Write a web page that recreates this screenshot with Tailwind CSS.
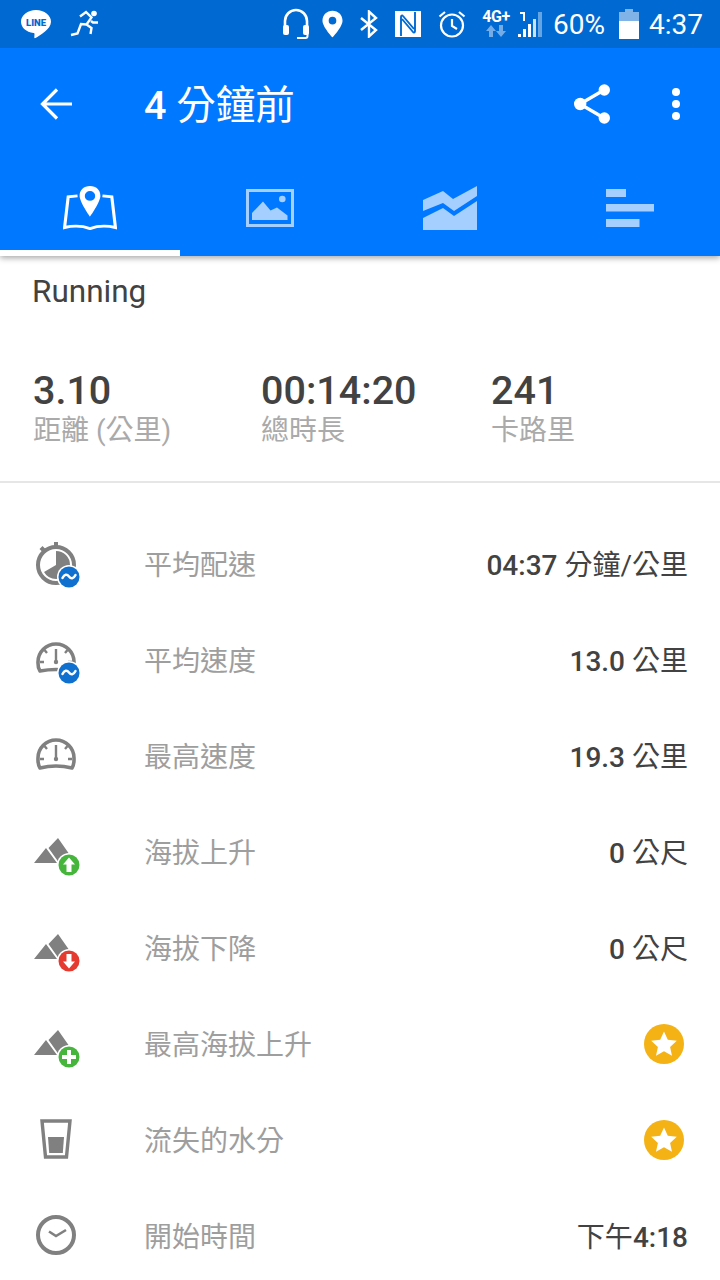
<!DOCTYPE html>
<html lang="en">
<head>
    <meta charset="UTF-8">
    <title>Activity</title>
    <script src="https://cdn.jsdelivr.net/npm/@tailwindcss/browser@4"></script>
</head>
<body class="bg-white w-[720px] h-[1280px] overflow-hidden font-['Roboto','Noto_Sans_CJK_TC',sans-serif]">
    <!-- Header -->
    <header class="relative z-10 bg-[#0078ff] shadow-[0_2px_6px_rgba(0,0,0,0.35)]">
        <!-- Status bar -->
        <div class="h-12 bg-[#0069d2] flex items-center text-white text-[28px]">
            <svg class="w-8 h-8 ml-5" viewBox="0 0 32 32"><path fill="#fff" d="M16 2C7.700 2 1 7.200 1 13.700c0 5.800 5.300 10.400 12.500 11.300.5.100 1 .4 1 1l-.2 3.500c0 .6.600 1 1.200.6 4-2.600 15.500-8.800 15.500-16.400C31 7.200 24.300 2 16 2z"/><text x="16" y="17.500" text-anchor="middle" font-size="9.500" font-weight="900" fill="#0069d2" font-family="Roboto">LINE</text></svg>
            <svg class="w-7 h-7 ml-[18px]" viewBox="0 0 28 28" fill="none" stroke="#fff" stroke-width="2.400"><circle cx="24" cy="3.500" r="2.800" fill="#fff" stroke="none"/><path d="M10 6.500L16 2l5.500 5.500-5 7 5 3.500-1 6M16.500 14.500L11 14l-3.500 9.500L1 25M21 11l2 1.500h5"/></svg>
            <svg class="w-[26px] h-8 ml-[185px]" viewBox="0 0 26 32" fill="none"><path stroke="#fff" stroke-width="2.600" d="M2 20v-7a11 11 0 0 1 22 0v7"/><rect x="0" y="17" width="6" height="10" rx="2" fill="#fff"/><rect x="20" y="17" width="6" height="10" rx="2" fill="#fff"/><path stroke="#fff" stroke-width="2" d="M24.500 25v3a2 2 0 0 1-2 2H14"/></svg>
            <svg class="w-[21px] h-7 ml-[13px]" viewBox="0 0 22 28"><path fill="#fff" fill-rule="evenodd" d="M11 0C5 0 .5 4.500.5 10.500.5 17 11 28 11 28s10.500-11 10.500-17.500C21.500 4.500 17 0 11 0zm0 14.500a4 4 0 1 1 0-8 4 4 0 0 1 0 8z"/></svg>
            <svg class="w-[18px] h-7 ml-[17px]" viewBox="0 0 18 28" fill="none" stroke="#fff" stroke-width="2.400"><path d="M1 8l15 12-7 6.500V1.500L16 8 1 20"/></svg>
            <svg class="w-[26px] h-[26px] ml-[17px]" viewBox="0 0 26 26"><rect width="26" height="26" fill="#fff"/><path fill="none" stroke="#0069d2" stroke-width="1.900" d="M6 25V6c0-1.500 1.200-2 2-1l11 13M20 1v19c0 1.500-1.200 2-2 1L7 8"/></svg>
            <svg class="w-7 h-7 ml-[17px]" viewBox="0 0 28 28" fill="none" stroke="#fff" stroke-width="2.200"><circle cx="14" cy="15.500" r="11"/><path d="M14 9v7l5 3M1.500 6.500L7 2M26.500 6.500L21 2"/></svg>
            <div class="w-8 h-7 ml-[14px] flex flex-col items-center">
                <span class="text-[16px] font-bold leading-[14px] tracking-[-0.5px]">4G+</span>
                <svg class="w-5 h-3 mt-[1px]" viewBox="0 0 20 12" fill="#fff" fill-opacity="0.45"><path d="M5 0l5 6H7v6H3V6H0zM15 12l5-6h-3V0h-4v6h-3z"/></svg>
            </div>
            <svg class="w-6 h-[26px] ml-[6px]" viewBox="0 0 24 26"><path fill="#fff" d="M0 26h3v-3H0zM5 26h3v-8H5zM10 26h3V13h-3z"/><path fill="#fff" fill-opacity="0.8" d="M15 26h3V8h-3z"/><path fill="#fff" fill-opacity="0.4" d="M20 26h4V1h-4z"/><path fill="#fff" d="M2 1h5v9H5V3H2z"/></svg>
            <span class="ml-[11px] leading-none pt-[2px]">60%</span>
            <div class="w-5 h-[30px] ml-[14px] flex flex-col">
                <div class="w-2 h-[3px] mx-auto bg-white/50"></div>
                <div class="h-[9px] bg-white/50"></div>
                <div class="flex-1 bg-white"></div>
            </div>
            <span class="ml-[10px] leading-none pt-[2px]">4:37</span>
        </div>

        <!-- Toolbar -->
        <div class="h-[120px] flex items-start text-white">
            <svg class="w-8 h-8 ml-10 mt-10" viewBox="0 0 32 32" fill="none" stroke="#fff" stroke-width="3.200"><path d="M3 16h29M17 1.500L2.500 16 17 30.500"/></svg>
            <h1 class="ml-[72px] mt-[33px] text-[39.500px] leading-[50px] font-medium whitespace-nowrap">4 <span class="font-normal">分鐘前</span></h1>
            <svg class="w-9 h-10 ml-auto mt-[36px]" viewBox="0 0 36 40" fill="none"><path stroke="#fff" stroke-width="3.400" d="M30 6L6 20l24 14"/><circle cx="30.300" cy="6" r="5.700" fill="#fff"/><circle cx="6.200" cy="20" r="6.200" fill="#fff"/><circle cx="30.300" cy="34" r="5.700" fill="#fff"/></svg>
            <div class="ml-[62px] mr-10 mt-10 flex flex-col gap-1">
                <div class="w-2 h-2 rounded-full bg-white"></div>
                <div class="w-2 h-2 rounded-full bg-white"></div>
                <div class="w-2 h-2 rounded-full bg-white"></div>
            </div>
        </div>

        <!-- Tabs -->
        <div class="h-[88px] grid grid-cols-4">
            <div class="flex justify-center pt-[18px] border-b-[6px] border-white">
                <svg class="w-[54px] h-[44px]" viewBox="1 0 52 44.500" preserveAspectRatio="none" fill="none"><path stroke="#fff" stroke-width="3" d="M15 10L6 11 2.500 42c8-2 16.500-2 24.500 1 8-3 16.500-3 24.500-1L48 11l-9-1"/><path fill="#fff" fill-rule="evenodd" d="M27 0c-6 0-10 4-10 10 0 6 10 21 10 21s10-15 10-21c0-6-4-10-10-10zm0 15a5 5 0 1 1 0-10 5 5 0 0 1 0 10z"/></svg>
            </div>
            <div class="flex justify-center pt-[21px]">
                <svg class="w-12 h-[38px]" viewBox="0 0 48 38" fill="none"><rect x="1.500" y="1.500" width="45" height="35" stroke="#a4cfff" stroke-width="3"/><path fill="#a4cfff" d="M6 31V24L17 12.500l7.500 9 6.500-3 10.500 8V31z"/><circle cx="36.300" cy="10" r="3.300" fill="#a4cfff"/></svg>
            </div>
            <div class="flex justify-center pt-[18px]">
                <svg class="w-[54px] h-[44px]" viewBox="0 0 54 44"><path fill="#a4cfff" d="M0 14L20 5l10 8L54 0v10L31 25 20 17 0 25zM0 32l20-10 11 8 23-15v29H0z"/></svg>
            </div>
            <div class="flex justify-center pt-[21px]">
                <svg class="w-12 h-[38px]" viewBox="0 0 48 38"><path fill="#a4cfff" d="M0 0h20v8H0zM0 15h48v7.500H0zM0 30h33.500v8H0z"/></svg>
            </div>
        </div>
    </header>

    <!-- Summary -->
    <section class="h-[227px] border-b-2 border-[#e6e6e6]">
        <div class="h-[72px] pl-8 flex items-center text-[31.500px] text-[#424242]">Running</div>
        <div class="grid grid-cols-[228px_230px_1fr] pl-[33px] mt-[37px]">
            <div>
                <div class="text-[39.500px] leading-[52px] font-medium text-[#424242]">3.10</div>
                <div class="text-[28px] leading-[28px] text-[#aaaaaa]">距離 (公里)</div>
            </div>
            <div>
                <div class="text-[39.500px] leading-[52px] font-medium text-[#424242]">00:14:20</div>
                <div class="text-[28px] leading-[28px] text-[#aaaaaa]">總時長</div>
            </div>
            <div>
                <div class="text-[39.500px] leading-[52px] font-medium text-[#424242]">241</div>
                <div class="text-[28px] leading-[28px] text-[#aaaaaa]">卡路里</div>
            </div>
        </div>
    </section>

    <!-- Stat rows -->
    <section class="pt-[33px]">
        <div class="h-24 flex items-center pl-8 pr-8">
            <svg class="w-12 h-12 shrink-0" viewBox="0 0 48 48" fill="none">
                <circle cx="24" cy="25" r="18" stroke="#808080" stroke-width="4"/>
                <path fill="#808080" d="M22 2h4v6h-4zM7.500 9l3-3 3.500 3.500-3 3z"/>
                <path fill="#808080" d="M24 25V11a14 14 0 0 1 0 28 14 14 0 0 1-12-7z"/>
                <circle cx="37" cy="37" r="12" fill="#fff"/><circle cx="37" cy="37" r="10.500" fill="#1070d0"/>
                <path stroke="#fff" stroke-width="2.500" stroke-linecap="round" d="M30.500 38c2-4 4.500-4 6.500-1.500s4.500 2.500 6.500-1.500"/>
            </svg>
            <span class="ml-[64px] pt-1 text-[28px] text-[#9e9e9e]">平均配速</span>
            <span class="ml-auto pt-1 text-[28px] font-medium text-[#424242]">04:37 <span class="font-normal">分鐘/公里</span></span>
        </div>
        <div class="h-24 flex items-center pl-8 pr-8">
            <svg class="w-12 h-12 shrink-0" viewBox="0 0 48 48" fill="none">
                <path stroke="#808080" stroke-width="3.600" stroke-linejoin="round" d="M8 35C5.500 31 6 28 6 26a18 18 0 0 1 36 0c0 2 .5 5-2 9Q24 32 8 35z"/>
                <path stroke="#808080" stroke-width="2.400" d="M24 13v12M8 26h4M36 26h4M12.500 14l2.500 3M35.500 14L33 17"/><circle cx="24" cy="26" r="2.200" fill="#808080"/>
                <circle cx="37" cy="37" r="12" fill="#fff"/><circle cx="37" cy="37" r="10.500" fill="#1070d0"/>
                <path stroke="#fff" stroke-width="2.500" stroke-linecap="round" d="M30.500 38c2-4 4.500-4 6.500-1.500s4.500 2.500 6.500-1.500"/>
            </svg>
            <span class="ml-[64px] pt-1 text-[28px] text-[#9e9e9e]">平均速度</span>
            <span class="ml-auto pt-1 text-[28px] font-medium text-[#424242]">13.0 <span class="font-normal">公里</span></span>
        </div>
        <div class="h-24 flex items-center pl-8 pr-8">
            <svg class="w-12 h-12 shrink-0" viewBox="0 0 48 48" fill="none">
                <path stroke="#808080" stroke-width="3.600" stroke-linejoin="round" d="M8 36C5.500 32 6 28 6 26a18 18 0 0 1 36 0c0 2 .5 6-2 10Q24 32 8 36z"/>
                <path stroke="#808080" stroke-width="2.400" d="M24 13v12M8 27h4M36 27h4M12.500 14l2.500 3M35.500 14L33 17"/><circle cx="24" cy="27" r="2.200" fill="#808080"/>
            </svg>
            <span class="ml-[64px] pt-1 text-[28px] text-[#9e9e9e]">最高速度</span>
            <span class="ml-auto pt-1 text-[28px] font-medium text-[#424242]">19.3 <span class="font-normal">公里</span></span>
        </div>
        <div class="h-24 flex items-center pl-8 pr-8">
            <svg class="w-12 h-12 shrink-0" viewBox="0 0 48 48" fill="none">
                <path fill="#808080" d="M2 35l12-15 11 15zM16.500 20L26 10l14 20-13 4.700z"/>
                <circle cx="37" cy="37" r="12" fill="#fff"/><circle cx="37" cy="37" r="10.500" fill="#46b53c"/>
                <path fill="#fff" d="M37 29.500l6 7h-3.500V44h-5v-7.500H31z"/>
            </svg>
            <span class="ml-[64px] pt-1 text-[28px] text-[#9e9e9e]">海拔上升</span>
            <span class="ml-auto pt-1 text-[28px] font-medium text-[#424242]">0 <span class="font-normal">公尺</span></span>
        </div>
        <div class="h-24 flex items-center pl-8 pr-8">
            <svg class="w-12 h-12 shrink-0" viewBox="0 0 48 48" fill="none">
                <path fill="#808080" d="M2 35l12-15 11 15zM16.500 20L26 10l14 20-13 4.700z"/>
                <circle cx="37" cy="37" r="12" fill="#fff"/><circle cx="37" cy="37" r="10.500" fill="#e53a30"/>
                <path fill="#fff" d="M37 44.500l6-7h-3.500V30h-5v7.500H31z"/>
            </svg>
            <span class="ml-[64px] pt-1 text-[28px] text-[#9e9e9e]">海拔下降</span>
            <span class="ml-auto pt-1 text-[28px] font-medium text-[#424242]">0 <span class="font-normal">公尺</span></span>
        </div>
        <div class="h-24 flex items-center pl-8 pr-8">
            <svg class="w-12 h-12 shrink-0" viewBox="0 0 48 48" fill="none">
                <path fill="#808080" d="M2 35l12-15 11 15zM16.500 20L26 10l14 20-13 4.700z"/>
                <circle cx="37" cy="37" r="12" fill="#fff"/><circle cx="37" cy="37" r="10.500" fill="#46b53c"/>
                <path fill="#fff" d="M35 30h4v5h5v4h-5v5h-4v-5h-5v-4h5z"/>
            </svg>
            <span class="ml-[64px] pt-1 text-[28px] text-[#9e9e9e]">最高海拔上升</span>
            <svg class="w-10 h-10 ml-auto mr-1" viewBox="0 0 40 40"><circle cx="20" cy="20" r="20" fill="#f4b214"/><path fill="#fff" d="M20 7.500l3.800 8.300 9 1-6.700 6.100 1.900 8.900-8-4.600-8 4.600 1.900-8.900-6.700-6.100 9-1z"/></svg>
        </div>
        <div class="h-24 flex items-center pl-8 pr-8">
            <svg class="w-12 h-12 shrink-0" viewBox="0 0 48 48" fill="none">
                <path stroke="#808080" stroke-width="3.400" d="M10 5h28l-3.500 36h-21z"/>
                <path fill="#808080" d="M16 21h16l-1.200 16H17.200z"/>
            </svg>
            <span class="ml-[64px] pt-1 text-[28px] text-[#9e9e9e]">流失的水分</span>
            <svg class="w-10 h-10 ml-auto mr-1" viewBox="0 0 40 40"><circle cx="20" cy="20" r="20" fill="#f4b214"/><path fill="#fff" d="M20 7.500l3.800 8.300 9 1-6.700 6.100 1.900 8.900-8-4.600-8 4.600 1.900-8.900-6.700-6.100 9-1z"/></svg>
        </div>
        <div class="h-24 flex items-center pl-8 pr-8">
            <svg class="w-12 h-12 shrink-0" viewBox="0 0 48 48" fill="none">
                <circle cx="24" cy="23" r="18" stroke="#808080" stroke-width="4"/>
                <path stroke="#808080" stroke-width="2.600" d="M17 19.500l7 4.500 10-6"/>
            </svg>
            <span class="ml-[64px] pt-1 text-[28px] text-[#9e9e9e]">開始時間</span>
            <span class="ml-auto pt-1 text-[28px] font-medium text-[#424242]"><span class="font-normal">下午</span>4:18</span>
        </div>
    </section>
</body>
</html>
